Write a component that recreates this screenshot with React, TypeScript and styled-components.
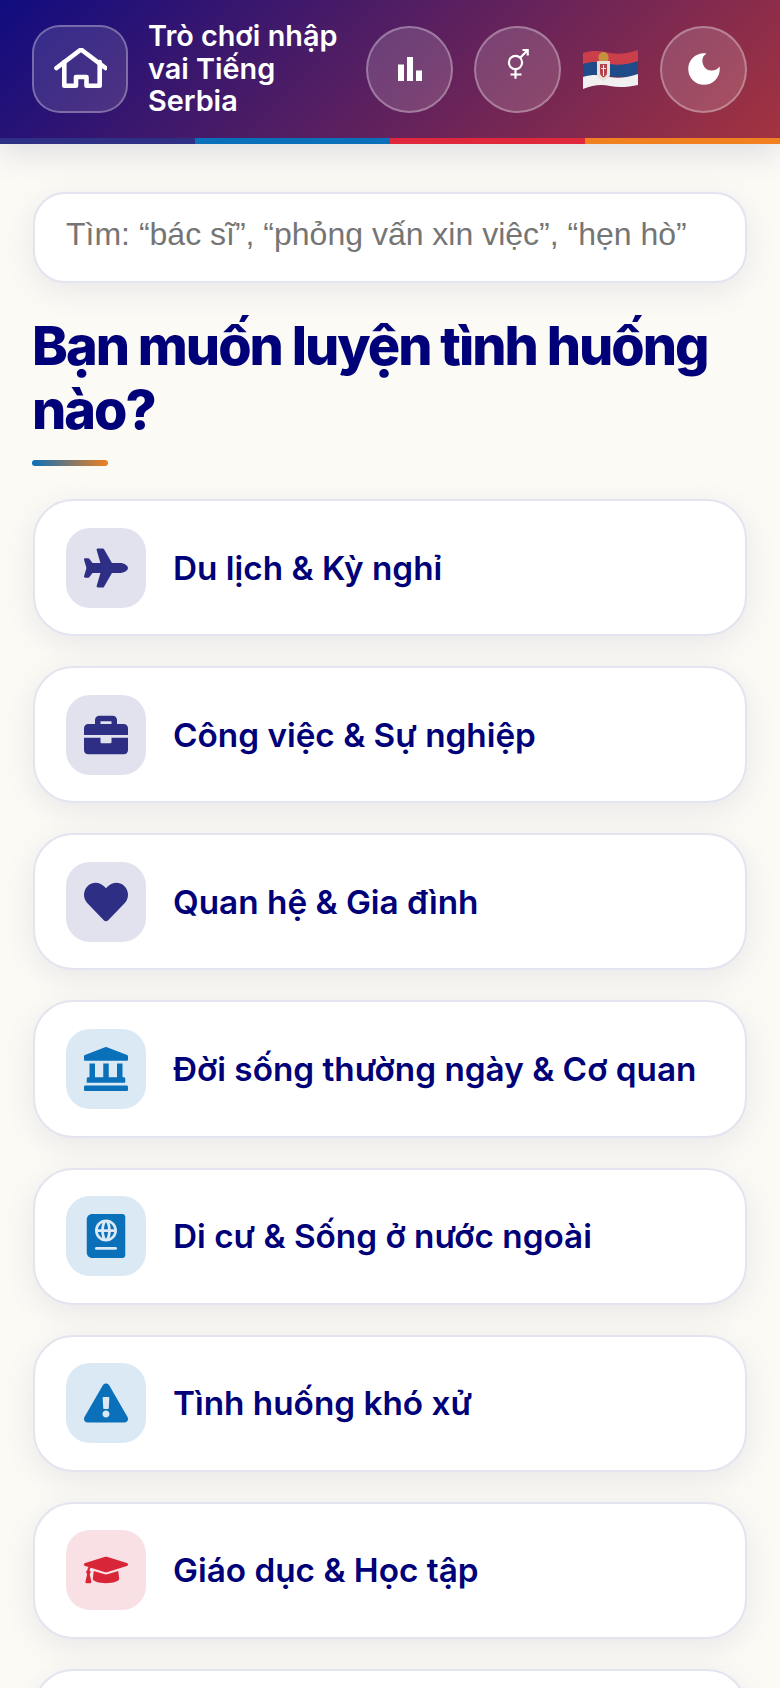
import React from "react";
import styled, { createGlobalStyle } from "styled-components";
import {
  FaPlane, FaBriefcase, FaHeart, FaLandmark, FaPassport,
  FaExclamationTriangle, FaGraduationCap,
} from "react-icons/fa";
import { MdBarChart, MdDarkMode } from "react-icons/md";

const Global = createGlobalStyle`
  html, body { margin: 0; padding: 0; height: 1688px; overflow: hidden; background: #fbfaf5; }
  * { box-sizing: border-box; }
  body { font-family: Inter, "Liberation Sans", sans-serif; }
`;

const Page = styled.div`
  width: 780px;
  height: 1688px;
  overflow: hidden;
  background: #fbfaf5;
`;

const Header = styled.header`
  position: relative;
  z-index: 2;
  box-shadow: 0 8px 32px rgba(0, 0, 80, 0.12);
`;

const Bar = styled.div`
  height: 138px;
  padding: 0 33px 0 32px;
  display: flex;
  align-items: center;
  background: linear-gradient(135deg, #100c80 0%, #a33340 100%);
`;

const HomeButton = styled.div`
  width: 96px;
  height: 88px;
  flex: none;
  border-radius: 28px;
  border: 2px solid rgba(255, 255, 255, 0.3);
  background: rgba(255, 255, 255, 0.12);
  display: flex;
  align-items: center;
  justify-content: center;
  color: #fff;
`;

const Title = styled.div`
  width: 197px;
  margin: 0 21px 0 20px;
  flex: none;
  font-size: 28.8px;
  line-height: 32.5px;
  font-weight: 600;
  color: #fff;
`;

const RoundButton = styled.div<{ $gap: number }>`
  width: 87px;
  height: 87px;
  flex: none;
  margin-left: ${(p) => p.$gap}px;
  border-radius: 50%;
  border: 2px solid rgba(255, 255, 255, 0.3);
  background: rgba(255, 255, 255, 0.15);
  display: flex;
  align-items: center;
  justify-content: center;
  color: #fff;
`;

const Flag = styled.svg`
  width: 55px;
  height: 41px;
  flex: none;
  margin: 0 1px 0 22px;
`;

const Stripes = styled.div`
  height: 6px;
  display: grid;
  grid-template-columns: repeat(4, 1fr);
`;

const Stripe = styled.div<{ $color: string }>`
  background: ${(p) => p.$color};
`;

const Main = styled.main`
  padding: 48px 33px 0;
`;

const Search = styled.input`
  display: block;
  width: 100%;
  height: 91px;
  padding: 0 31px 6px;
  border: 2px solid #e4e4f0;
  border-radius: 32px;
  background: #fff;
  outline: none;
  box-shadow: 0 8px 32px rgba(0, 0, 80, 0.08);
  font-family: "Liberation Sans", Arial, sans-serif;
  font-size: 32px;
  &::placeholder { color: #757575; opacity: 1; }
`;

const Heading = styled.h1`
  margin: 31px 0 0 -1px;
  font-size: 54px;
  line-height: 63.5px;
  font-weight: 800;
  letter-spacing: -2px;
  color: #000078;
`;

const Rule = styled.div`
  width: 76px;
  height: 6px;
  margin: 19px 0 0 -1px;
  border-radius: 3px;
  background: linear-gradient(90deg, #0a70ba, #f08020);
`;

const List = styled.div`
  margin-top: 33px;
  display: flex;
  flex-direction: column;
  gap: 30px;
`;

const Card = styled.div`
  height: 137.14px;
  padding: 0 31px;
  flex: none;
  display: flex;
  align-items: center;
  gap: 27px;
  border: 2px solid #e4e4f0;
  border-radius: 40px;
  background: #fff;
  box-shadow: 0 8px 32px rgba(0, 0, 80, 0.08);
`;

const IconBox = styled.div<{ $bg: string; $fg: string }>`
  width: 80px;
  height: 80px;
  flex: none;
  border-radius: 24px;
  background: ${(p) => p.$bg};
  color: ${(p) => p.$fg};
  display: flex;
  align-items: center;
  justify-content: center;
`;

const Label = styled.div`
  font-size: 33.3px;
  font-weight: 600;
  color: #000078;
  white-space: nowrap;
`;

const navy = { $bg: "#e2e2ee", $fg: "#2e2e85" };
const blue = { $bg: "#dbe9f5", $fg: "#0a70ba" };
const red = { $bg: "#f9e0e5", $fg: "#d92538" };

const items = [
  { label: "Du lịch & Kỳ nghỉ", tone: navy, icon: <FaPlane size={44} /> },
  { label: "Công việc & Sự nghiệp", tone: navy, icon: <FaBriefcase size={44} /> },
  { label: "Quan hệ & Gia đình", tone: navy, icon: <FaHeart size={44} /> },
  { label: "Đời sống thường ngày & Cơ quan", tone: blue, icon: <FaLandmark size={44} /> },
  { label: "Di cư & Sống ở nước ngoài", tone: blue, icon: <FaPassport size={44} /> },
  { label: "Tình huống khó xử", tone: blue, icon: <FaExclamationTriangle size={44} /> },
  { label: "Giáo dục & Học tập", tone: red, icon: <FaGraduationCap size={44} /> },
];

const HouseIcon = () => (
  <svg width="54" height="42" viewBox="-1 1 54 42" fill="none" stroke="#fff" strokeWidth="4.6" strokeLinejoin="round" strokeLinecap="round">
    <path d="M2.5 21 L27 2.5 L51.5 21" />
    <path d="M10.3 15 V38.7 H22 V30 H32.5 V38.7 H45.7 V15" />
  </svg>
);

const GenderIcon = () => (
  <svg width="30" height="40" viewBox="0 0 30 40" fill="none" stroke="#fff" strokeWidth="2.2">
    <circle cx="12.5" cy="13.5" r="6.6" />
    <path d="M12.5 20 V29.8 M7.5 25.5 H18.5 M17.2 8.8 L24.5 1.2" />
    <path d="M19.5 1 H24.7 V6.4" />
  </svg>
);

const SerbiaFlag = () => (
  <Flag viewBox="0 0 55 41">
    <defs>
      <clipPath id="wave">
        <path d="M0 4 C10 1 18 2 27 4 C36 6 46 4 55 1 V36 C46 38 36 39 27 37 C18 35 10 36 0 40 Z" />
      </clipPath>
    </defs>
    <g clipPath="url(#wave)">
      <rect width="55" height="16" fill="#cb3f4b" />
      <path d="M0 15 C10 12 18 13 27 15 C36 17 46 15 55 12 V26 C46 28 36 29 27 27 C18 25 10 26 0 29 Z" fill="#1f4b88" />
      <path d="M0 28 C10 25 18 26 27 28 C36 30 46 28 55 25 V41 H0 Z" fill="#f2eff1" />
    </g>
    <path d="M15.5 10 C15 5 18 3 20.5 3 C23 3 26 5 25.5 10 L24.5 12 H16.5 Z" fill="#c4923f" />
    <path d="M14 12 H27 V25 C27 29 23.5 30.5 20.5 32 C17.5 30.5 14 29 14 25 Z" fill="#e9e2dc" />
    <path d="M17 15 H24 V24 C24 26 22 27.5 20.5 28.5 C19 27.5 17 26 17 24 Z" fill="#b5434a" />
    <path d="M20 16 H21 V27 H20 Z M18 19 H23 V20 H18 Z" fill="#f6f2ef" />
  </Flag>
);

export default function App() {
  return (
    <Page>
      <Global />
      <Header>
        <Bar>
          <HomeButton><HouseIcon /></HomeButton>
          <Title>Trò chơi nhập vai Tiếng Serbia</Title>
          <RoundButton $gap={0}><MdBarChart size={36} /></RoundButton>
          <RoundButton $gap={21}><GenderIcon /></RoundButton>
          <SerbiaFlag />
          <RoundButton $gap={21}><MdDarkMode size={42} /></RoundButton>
        </Bar>
        <Stripes>
          <Stripe $color="#2e3085" />
          <Stripe $color="#0a70ba" />
          <Stripe $color="#e0283c" />
          <Stripe $color="#f08020" />
        </Stripes>
      </Header>
      <Main>
        <Search placeholder="Tìm: “bác sĩ”, “phỏng vấn xin việc”, “hẹn hò”" />
        <Heading>Bạn muốn luyện tình huống nào?</Heading>
        <Rule />
        <List>
          {items.map((it) => (
            <Card key={it.label}>
              <IconBox {...it.tone}>{it.icon}</IconBox>
              <Label>{it.label}</Label>
            </Card>
          ))}
          <Card />
        </List>
      </Main>
    </Page>
  );
}
